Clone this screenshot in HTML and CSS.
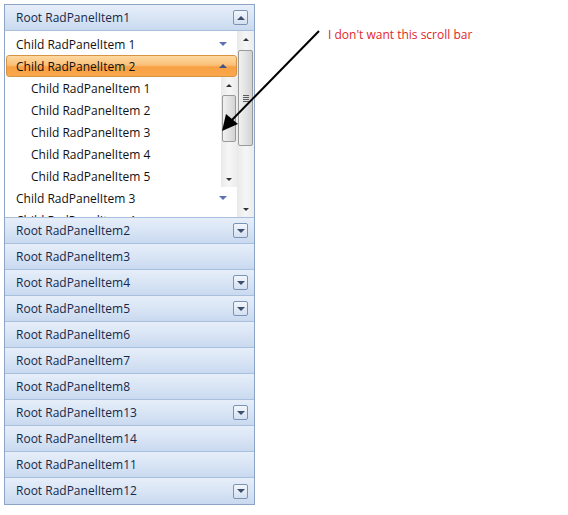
FILE: index.html
```html
<!DOCTYPE html>
<html>
<head>
<meta charset="utf-8">
<link rel="stylesheet" href="styles.css">
</head>
<body>
<div class="page">
  <div class="panel">
    <div class="root">
      <span class="label">Root RadPanelItem1</span>
      <span class="btn"><span class="tri up"></span></span>
    </div>
    <div class="content">
      <div class="list">
        <div class="child"><span>Child RadPanelItem 1</span><span class="mark down"></span></div>
        <div class="child sel"><span>Child RadPanelItem 2</span><span class="mark up white"></span></div>
        <div class="sub">
          <div class="sublist">
            <div class="subchild">Child RadPanelItem 1</div>
            <div class="subchild">Child RadPanelItem 2</div>
            <div class="subchild">Child RadPanelItem 3</div>
            <div class="subchild">Child RadPanelItem 4</div>
            <div class="subchild">Child RadPanelItem 5</div>
          </div>
          <div class="sbar inner">
            <div class="sarrow"><span class="stri up"></span></div>
            <div class="strack"><div class="thumb t-inner"></div></div>
            <div class="sarrow"><span class="stri down"></span></div>
          </div>
        </div>
        <div class="child"><span>Child RadPanelItem 3</span><span class="mark down"></span></div>
        <div class="child"><span>Child RadPanelItem 4</span><span class="mark down"></span></div>
      </div>
      <div class="sbar outer">
        <div class="sarrow"><span class="stri up"></span></div>
        <div class="strack"><div class="thumb t-outer"><span class="grip"></span></div></div>
        <div class="sarrow"><span class="stri down"></span></div>
      </div>
    </div>
    <div class="root"><span class="label">Root RadPanelItem2</span><span class="btn"><span class="tri down"></span></span></div>
    <div class="root"><span class="label">Root RadPanelItem3</span></div>
    <div class="root"><span class="label">Root RadPanelItem4</span><span class="btn"><span class="tri down"></span></span></div>
    <div class="root"><span class="label">Root RadPanelItem5</span><span class="btn"><span class="tri down"></span></span></div>
    <div class="root"><span class="label">Root RadPanelItem6</span></div>
    <div class="root"><span class="label">Root RadPanelItem7</span></div>
    <div class="root"><span class="label">Root RadPanelItem8</span></div>
    <div class="root"><span class="label">Root RadPanelItem13</span><span class="btn"><span class="tri down"></span></span></div>
    <div class="root"><span class="label">Root RadPanelItem14</span></div>
    <div class="root"><span class="label">Root RadPanelItem11</span></div>
    <div class="root last"><span class="label">Root RadPanelItem12</span><span class="btn"><span class="tri down"></span></span></div>
  </div>
  <div class="note">I don't want this scroll bar</div>
  <svg class="arrow" width="568" height="515" viewBox="0 0 568 515">
    <line x1="319" y1="31" x2="230" y2="122" stroke="#000" stroke-width="2"/>
    <polygon points="222,131 226,114 238,124" fill="#000"/>
  </svg>
</div>
</body>
</html>
```
FILE: styles.css
```css
html, body { margin: 0; padding: 0; background: #fff; }
body { font-family: "Open Sans", "Noto Sans", "DejaVu Sans", sans-serif; font-size: 12px; }
.page { position: relative; width: 568px; height: 515px; padding: 4px 0 0 4px; box-sizing: border-box; }
.panel {
  width: 251px;
  border: 1px solid #8ca5c6;
  box-sizing: border-box;
  background: #fff;
}
.root {
  height: 26px;
  box-sizing: border-box;
  border-bottom: 1px solid #a9c0dd;
  background: linear-gradient(#e6eef9 0%, #d9e5f5 50%, #c9d9ef 100%);
  display: flex;
  align-items: center;
  justify-content: space-between;
  padding: 0 6px 0 11px;
  color: #15294a;
}
.root.last { border-bottom: 0; }
.root .label { line-height: 26px; }
.btn {
  width: 15px; height: 15px;
  box-sizing: border-box;
  border: 1px solid #7d93b4;
  border-radius: 2px;
  background: linear-gradient(#f2f6fc, #d3e0f1);
  display: flex; align-items: center; justify-content: center;
}
.tri { width: 0; height: 0; border-left: 4px solid transparent; border-right: 4px solid transparent; }
.tri.up { border-bottom: 4px solid #3e4f6d; }
.tri.down { border-top: 4px solid #3e4f6d; }
.content {
  height: 187px;
  display: flex;
  border-bottom: 1px solid #a9c0dd;
  box-sizing: border-box;
}
.list { flex: 1; overflow: hidden; padding-top: 2px; }
.child {
  height: 22px;
  display: flex;
  align-items: center;
  justify-content: space-between;
  padding: 0 10px 0 11px;
  color: #111;
  box-sizing: border-box;
}
.child.sel {
  margin: 0 0 0 1px;
  background: linear-gradient(#fdd9a1 0%, #fbc079 45%, #f8a043 55%, #f9a84e 100%);
  border: 1px solid #d79544;
  border-radius: 3px;
  padding: 0 9px 0 9px;
}
.mark { width: 0; height: 0; border-left: 4px solid transparent; border-right: 4px solid transparent; }
.mark.down { border-top: 4px solid #5a72b5; }
.mark.up { border-bottom: 4px solid #5a72b5; }
.mark.up.white { border-bottom-color: #40528a; }
.sub { display: flex; height: 110px; }
.sublist { flex: 1; padding-top: 1px; }
.subchild { height: 22px; line-height: 22px; padding-left: 26px; color: #111; }
.sbar {
  display: flex; flex-direction: column;
  background: linear-gradient(90deg, #e9e9e9, #f6f6f6 50%, #ececec);
}
.sbar.inner { width: 16px; }
.sbar.outer { width: 17px; }
.sarrow { height: 16px; display: flex; align-items: center; justify-content: center; }
.stri { width: 0; height: 0; border-left: 3px solid transparent; border-right: 3px solid transparent; }
.stri.up { border-bottom: 3px solid #333; }
.stri.down { border-top: 3px solid #333; }
.strack { flex: 1; display: flex; flex-direction: column; }
.thumb {
  margin: 0 1px;
  border: 1px solid #9a9a9a;
  border-radius: 2px;
  box-sizing: border-box;
  background: linear-gradient(90deg, #f1f1f1, #e3e3e3 50%, #d3d3d3);
  display: flex; align-items: center; justify-content: center;
}
.t-inner { height: 47px; margin-top: 2px; }
.t-outer { height: 96px; margin-top: 3px; }
.grip {
  width: 6px; height: 7px;
  background: repeating-linear-gradient(#5c5c5c 0 1px, transparent 1px 2px);
}
.note {
  position: absolute;
  left: 328px; top: 26px;
  color: #e3262b;
  font-size: 12px;
  font-family: "Open Sans", "Noto Sans", sans-serif;
}
.arrow { position: absolute; left: 0; top: 0; pointer-events: none; }
```
